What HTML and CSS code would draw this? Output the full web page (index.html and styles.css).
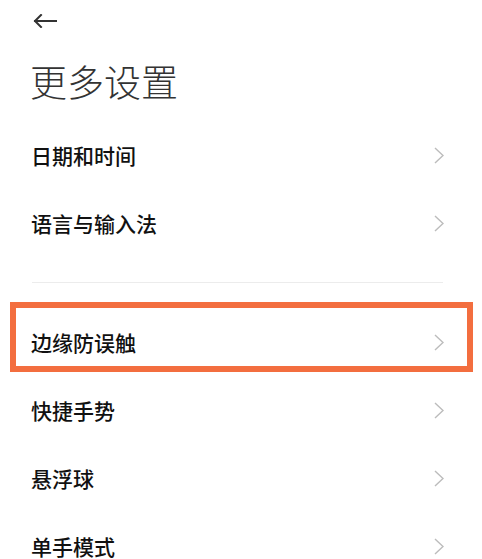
FILE: index.html
```html
<!DOCTYPE html>
<html lang="zh-CN">
<head>
<meta charset="utf-8">
<title>更多设置</title>
<link rel="stylesheet" href="styles.css">
</head>
<body>
<div class="page">
  <header class="topbar">
    <svg class="back" width="24" height="14" viewBox="0 0 24 14" aria-hidden="true">
      <path d="M23 7H2M8 1L2 7l6 6" fill="none" stroke="#333" stroke-width="2" stroke-linecap="square"/>
    </svg>
  </header>
  <h1 class="title">更多设置</h1>
  <ul class="list">
    <li class="row"><span class="label">日期和时间</span><svg class="chev" width="10" height="17" viewBox="0 0 10 17"><path d="M1 1l8 7.5L1 16" fill="none" stroke="#bcbcbc" stroke-width="1.4"/></svg></li>
    <li class="row"><span class="label">语言与输入法</span><svg class="chev" width="10" height="17" viewBox="0 0 10 17"><path d="M1 1l8 7.5L1 16" fill="none" stroke="#bcbcbc" stroke-width="1.4"/></svg></li>
  </ul>
  <div class="divider"><div class="line"></div></div>
  <ul class="list">
    <li class="row highlighted"><span class="label">边缘防误触</span><svg class="chev" width="10" height="17" viewBox="0 0 10 17"><path d="M1 1l8 7.5L1 16" fill="none" stroke="#bcbcbc" stroke-width="1.4"/></svg><span class="mark"></span></li>
    <li class="row"><span class="label">快捷手势</span><svg class="chev" width="10" height="17" viewBox="0 0 10 17"><path d="M1 1l8 7.5L1 16" fill="none" stroke="#bcbcbc" stroke-width="1.4"/></svg></li>
    <li class="row"><span class="label">悬浮球</span><svg class="chev" width="10" height="17" viewBox="0 0 10 17"><path d="M1 1l8 7.5L1 16" fill="none" stroke="#bcbcbc" stroke-width="1.4"/></svg></li>
    <li class="row"><span class="label">单手模式</span><svg class="chev" width="10" height="17" viewBox="0 0 10 17"><path d="M1 1l8 7.5L1 16" fill="none" stroke="#bcbcbc" stroke-width="1.4"/></svg></li>
  </ul>
</div>
</body>
</html>
```

FILE: styles.css
```css
html, body {
  margin: 0;
  padding: 0;
  background: #ffffff;
}
body {
  font-family: "Noto Sans CJK SC", "Noto Sans", sans-serif;
  overflow: hidden;
  height: 559px;
}
.page {
  width: 482px;
}
.topbar {
  height: 42px;
  display: flex;
  align-items: center;
  padding-left: 33px;
}
.back {
  display: block;
}
.title {
  margin: 0;
  padding: 21px 0 21px 30px;
  font-size: 37px;
  line-height: 37px;
  font-weight: 300;
  color: #333333;
  letter-spacing: 0;
}
.list {
  list-style: none;
  margin: 0;
  padding: 0;
}
.row {
  position: relative;
  height: 68px;
  display: flex;
  align-items: center;
  justify-content: space-between;
  padding: 0 38px 0 31px;
}
.label {
  font-size: 21px;
  line-height: 21px;
  font-weight: 500;
  color: #111111;
}
.chev {
  display: block;
}
.divider {
  height: 51px;
  display: flex;
  align-items: center;
  padding: 0 39px 0 32px;
}
.line {
  flex: 1;
  height: 1px;
  background: #ececec;
}
.mark {
  position: absolute;
  left: 10px;
  right: 9px;
  top: -6px;
  height: 70px;
  box-sizing: border-box;
  border: 6px solid #f36e3f;
}
```
